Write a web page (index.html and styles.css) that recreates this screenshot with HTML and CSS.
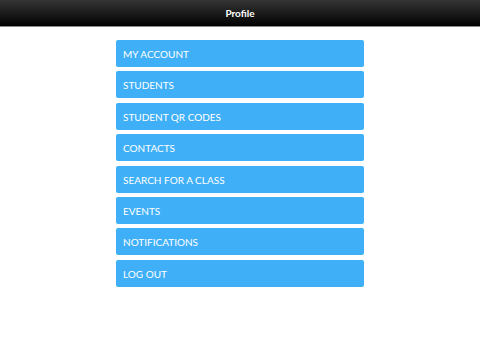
FILE: index.html
```html
<!DOCTYPE html>
<html lang="en">
<head>
    <meta charset="UTF-8" />
    <title>Profile</title>
    <link rel="stylesheet" href="styles.css">
</head>
<body>
    <header class="top-bar">
        <h1 class="top-title">Profile</h1>
    </header>

    <main class="menu">
        <a class="menu-item" href="#">My Account</a>
        <a class="menu-item" href="#">Students</a>
        <a class="menu-item" href="#">Student QR Codes</a>
        <a class="menu-item" href="#">Contacts</a>
        <a class="menu-item" href="#">Search for a Class</a>
        <a class="menu-item" href="#">Events</a>
        <a class="menu-item" href="#">Notifications</a>
        <a class="menu-item" href="#">Log Out</a>
    </main>
</body>
</html>
```

FILE: styles.css
```css
/* Page */
body {
    margin: 0;
    background: #fff;
    font-family: Lato, "Liberation Sans", sans-serif;
}

/* Top bar */
.top-bar {
    height: 26px;
    background: linear-gradient(#353535, #020202);
    border-bottom: 1px solid #8a8a8a;
    display: flex;
    align-items: center;
    justify-content: center;
}

.top-title {
    margin: 0;
    color: #fff;
    font-size: 10px;
    font-weight: bold;
}

/* Menu list */
.menu {
    width: 248px;
    margin: 13px auto 0;
    display: flex;
    flex-direction: column;
    gap: 4.4px;
}

.menu-item {
    height: 27px;
    display: flex;
    align-items: center;
    padding: 1px 0 0 7px;
    box-sizing: border-box;
    background: #3fb0f7;
    border-radius: 2px;
    color: #fff;
    text-decoration: none;
    text-transform: uppercase;
    font-size: 10px;
}
```
